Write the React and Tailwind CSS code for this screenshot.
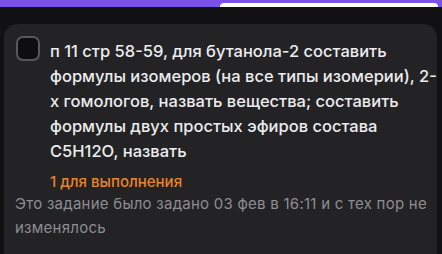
import React from "react";

const lines = [
  "п 11 стр 58-59, для бутанола-2 составить",
  "формулы изомеров (на все типы изомерии), 2-",
  "х гомологов, назвать вещества; составить",
  "формулы двух простых эфиров состава",
  "C5H12O, назвать",
];

export default function App() {
  return (
    <div
      className="w-[442px] h-[254px] overflow-hidden bg-[#111113] flex flex-col"
      style={{ fontFamily: "Inter, 'Noto Sans', sans-serif" }}
    >
      {/* top bar */}
      <div className="h-[7px] bg-[#7b52e8] shrink-0 flex items-end">
        <div className="ml-[220px] w-[218px] h-[4px] bg-white rounded-t-[4px]" />
      </div>

      <div className="flex-1 pt-[17px] pl-[4px] pr-[5px]">
        <div className="h-full bg-[#232325] rounded-t-[14px] pt-[12px] px-[12px]">
          <div className="flex gap-[10px]">
            <div className="w-[24px] h-[25px] shrink-0 rounded-[7px] border-2 border-[#58585c] bg-[#0e0e10]" />
            <div className="pt-[3px] text-[#ececee] text-[16.5px] leading-[25px] font-medium">
              {lines.map((l) => (
                <div key={l} className="whitespace-nowrap">
                  {l}
                </div>
              ))}
              <div className="text-[#e8842c] text-[15px] leading-[21px] mt-[7px]">
                1 для выполнения
              </div>
            </div>
          </div>
          <div className="text-[#8d8d92] text-[15px] tracking-[0.25px] leading-[24px] -ml-[1px] whitespace-nowrap">
            <div>Это задание было задано 03 фев в 16:11 и с тех пор не</div>
            <div>изменялось</div>
          </div>
        </div>
      </div>
    </div>
  );
}
